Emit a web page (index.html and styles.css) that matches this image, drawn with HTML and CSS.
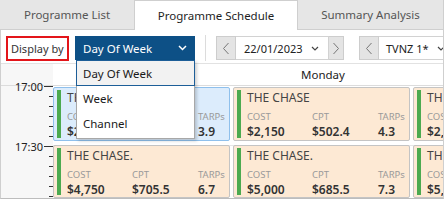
FILE: index.html
```html
<!DOCTYPE html>
<html>
<head>
<meta charset="utf-8">
<link rel="stylesheet" href="styles.css">
</head>
<body>
<div class="app">
  <div class="tabs">
    <div class="tab tab-list">Programme List</div>
    <div class="tab tab-sched active">Programme Schedule</div>
    <div class="tab tab-sum">Summary Analysis</div>
  </div>
  <div class="panel">
    <div class="toolbar">
      <div class="display-label">Display by</div>
      <div class="select-wrap">
        <div class="select">
          <span>Day Of Week</span>
          <svg class="chev" width="9" height="6" viewBox="0 0 9 6"><path d="M1 1 L4.5 4.5 L8 1" fill="none" stroke="#fff" stroke-width="1.5"/></svg>
        </div>
        <ul class="menu">
          <li class="item selected">Day Of Week</li>
          <li class="item">Week</li>
          <li class="item">Channel</li>
        </ul>
      </div>
      <div class="sep"></div>
      <div class="nav nav-date">
        <div class="btn"><svg width="8" height="13" viewBox="0 0 8 13"><path d="M6.5 1 L1.5 6.5 L6.5 12" fill="none" stroke="#777" stroke-width="1"/></svg></div>
        <div class="field date-field">
          <span>22/01/2023</span>
          <svg class="chev-s" width="8" height="5" viewBox="0 0 8 5"><path d="M1 1 L4 4 L7 1" fill="none" stroke="#444" stroke-width="1.2"/></svg>
        </div>
        <div class="btn btn-next"><svg width="8" height="13" viewBox="0 0 8 13"><path d="M1.5 1 L6.5 6.5 L1.5 12" fill="none" stroke="#777" stroke-width="1"/></svg></div>
      </div>
      <div class="nav nav-chan">
        <div class="btn"><svg width="8" height="13" viewBox="0 0 8 13"><path d="M6.5 1 L1.5 6.5 L6.5 12" fill="none" stroke="#777" stroke-width="1"/></svg></div>
        <div class="field chan-field">
          <span>TVNZ 1*</span>
          <svg class="chev-s" width="8" height="5" viewBox="0 0 8 5"><path d="M1 1 L4 4 L7 1" fill="none" stroke="#444" stroke-width="1.2"/></svg>
        </div>
      </div>
    </div>
    <div class="head-row">
      <div class="time-head"></div>
      <div class="day">Sunday</div>
      <div class="day">Monday</div>
      <div class="day">Tuesday</div>
    </div>
    <div class="body">
      <div class="times">
        <div class="slot"><span class="tlabel">17:00</span></div>
        <div class="slot"><span class="tlabel">17:30</span></div>
      </div>
      <div class="cols">
        <div class="col">
          <div class="card sel">
            <div class="bar"></div>
            <div class="content">
              <div class="title">THE CHASE</div>
              <div class="stats">
                <span class="lbl">COST</span><span class="lbl">CPT</span><span class="lbl">TARPs</span>
                <span class="val">$2,300</span><span class="val">$589.7</span><span class="val">3.9</span>
              </div>
            </div>
          </div>
          <div class="card">
            <div class="bar"></div>
            <div class="content">
              <div class="title">THE CHASE.</div>
              <div class="stats">
                <span class="lbl">COST</span><span class="lbl">CPT</span><span class="lbl">TARPs</span>
                <span class="val">$4,750</span><span class="val">$705.5</span><span class="val">6.7</span>
              </div>
            </div>
          </div>
        </div>
        <div class="col">
          <div class="card">
            <div class="bar"></div>
            <div class="content">
              <div class="title">THE CHASE</div>
              <div class="stats">
                <span class="lbl">COST</span><span class="lbl">CPT</span><span class="lbl">TARPs</span>
                <span class="val">$2,150</span><span class="val">$502.4</span><span class="val">4.3</span>
              </div>
            </div>
          </div>
          <div class="card">
            <div class="bar"></div>
            <div class="content">
              <div class="title">THE CHASE.</div>
              <div class="stats">
                <span class="lbl">COST</span><span class="lbl">CPT</span><span class="lbl">TARPs</span>
                <span class="val">$5,000</span><span class="val">$685.5</span><span class="val">7.3</span>
              </div>
            </div>
          </div>
        </div>
        <div class="col">
          <div class="card">
            <div class="bar"></div>
            <div class="content">
              <div class="title">THE CHASE</div>
              <div class="stats">
                <span class="lbl">COST</span><span class="lbl">CPT</span><span class="lbl">TARPs</span>
                <span class="val">$2,150</span><span class="val">$502.4</span><span class="val">4.3</span>
              </div>
            </div>
          </div>
          <div class="card">
            <div class="bar"></div>
            <div class="content">
              <div class="title">THE CHASE.</div>
              <div class="stats">
                <span class="lbl">COST</span><span class="lbl">CPT</span><span class="lbl">TARPs</span>
                <span class="val">$5,000</span><span class="val">$685.5</span><span class="val">7.3</span>
              </div>
            </div>
          </div>
        </div>
      </div>
    </div>
  </div>
</div>
</body>
</html>
```

FILE: styles.css
```css
* { box-sizing: border-box; }
html, body { margin: 0; padding: 0; background: #fff; }
body { font-family: "Noto Sans", "Open Sans", sans-serif; color: #222; }

.app {
  width: 444px;
  height: 199px;
  display: flex;
  flex-direction: column;
  overflow: hidden;
}

/* tabs */
.tabs { display: flex; height: 30px; flex: none; }
.tab {
  flex: none;
  display: flex;
  align-items: center;
  justify-content: center;
  font-size: 11.5px;
  color: #555;
  background: #e6e6e6;
  border-bottom: 1px solid #cfcfcf;
  white-space: nowrap;
}
.tab-list { width: 135px; border-right: 1px solid #cfcfcf; }
.tab-sched { width: 162px; }
.tab-sum { width: 147px; border-left: 1px solid #cfcfcf; border-right: 1px solid #cfcfcf; }
.tab.active {
  background: #fff;
  color: #1e1e1e;
  border-top: 1px solid #cfcfcf;
  border-bottom: none;
}

/* panel */
.panel {
  flex: 1;
  display: flex;
  flex-direction: column;
  border-left: 1px solid #cfcfcf;
  border-right: 1px solid #cfcfcf;
  border-bottom: 1px solid #bdbdbd;
  overflow: hidden;
  min-height: 0;
}

.toolbar {
  flex: none;
  height: 34px;
  display: flex;
  align-items: flex-start;
  padding: 6px 0 0 5px;
  border-bottom: 1px solid #e2e2e2;
  font-size: 11px;
  white-space: nowrap;
}
.toolbar > * { flex: none; }
.display-label {
  width: 63px;
  height: 25px;
  border: 2px solid #e3151a;
  display: flex;
  align-items: center;
  padding-left: 3px;
  color: #333;
}
.select-wrap { position: relative; margin-left: 6px; z-index: 5; }
.select {
  width: 120px;
  height: 24px;
  background: #0d5086;
  color: #fff;
  font-size: 11.5px;
  display: flex;
  align-items: center;
  justify-content: space-between;
  padding: 0 8px 0 8px;
}
.chev { display: block; }

.menu {
  position: absolute;
  left: 1px;
  top: 24px;
  width: 119px;
  margin: 0;
  padding: 0 0 2px 0;
  list-style: none;
  background: #fff;
  border: 1px solid #a8a8a8;
  box-shadow: 2px 2px 3px rgba(0,0,0,0.18);
  font-size: 11.5px;
}
.item {
  height: 25px;
  display: flex;
  align-items: center;
  padding-left: 6px;
  color: #1a1a1a;
  border: 1px solid transparent;
  margin-left: -1px;
  width: 119px;
}
.item.selected {
  height: 26px;
  background: #f2f2f2;
  border-color: #1d5e98;
  margin-top: -1px;
}

.sep {
  width: 1px;
  height: 26px;
  background: #dcdcdc;
  margin: -1px 0 0 10px;
}

.nav { display: flex; height: 24px; margin-left: 10px; }
.nav-chan { margin-left: 15px; }
.btn {
  flex: none;
  width: 20px;
  height: 24px;
  background: #e4e4e4;
  border: 1px solid #cdcdcd;
  display: flex;
  align-items: center;
  justify-content: center;
}
.btn-next { width: 15px; border-left: none; }
.field {
  flex: none;
  height: 24px;
  border: 1px solid #d2d2d2;
  border-left: none;
  display: flex;
  align-items: center;
  color: #222;
}
.date-field { width: 93px; padding-left: 8px; }
.date-field .chev-s { margin-left: 8px; }
.chan-field { width: 80px; padding-left: 7px; border-right: none; }
.chan-field .chev-s { margin-left: 8px; }

/* header row */
.head-row {
  flex: none;
  height: 22px;
  display: flex;
  border-bottom: 1px solid #dcdcdc;
  font-size: 11.5px;
}
.time-head { width: 52px; flex: none; background: #f7f7f7; }
.day {
  flex: none;
  width: 180px;
  display: flex;
  align-items: center;
  justify-content: center;
  color: #222;
}

/* body */
.body { flex: 1; display: flex; min-height: 0; }
.times { width: 52px; flex: none; background: #f7f7f7; }
.slot {
  height: 60px;
  display: flex;
  justify-content: flex-end;
  background:
    linear-gradient(#333, #333) right 0 top 0 / 9px 1px no-repeat,
    repeating-linear-gradient(to bottom, #333 0 1px, transparent 1px 10px) right 0 top 0 / 4px 100% no-repeat;
}
.tlabel {
  font-size: 11px;
  line-height: 16px;
  height: 16px;
  margin-top: -7px;
  margin-right: 10px;
  color: #222;
}

.cols {
  flex: none;
  display: flex;
  gap: 3px;
  padding-top: 1px;
  background: linear-gradient(#e6e6e6, #e6e6e6) left 0 top 59px / 100% 1px no-repeat;
}
.col { flex: none; width: 177px; display: flex; flex-direction: column; gap: 4px; }
.card {
  height: 56px;
  display: flex;
  background: #fde9d4;
  border: 1px solid #c4c4c4;
  border-radius: 2px;
  overflow: hidden;
}
.card.sel { background: #dcecfc; border-color: #8fc0ec; }
.bar { width: 4px; flex: none; background: #4caa50; margin: 2px 0 2px 3px; }
.content { padding: 2px 0 0 6px; flex: 1; min-width: 0; }
.title { font-size: 12px; line-height: 15px; color: #444; white-space: nowrap; }
.stats {
  display: grid;
  grid-template-columns: 65px 66px auto;
  row-gap: 1px;
  margin-top: 6px;
}
.lbl { font-size: 9.5px; line-height: 12px; color: #9a9a9a; }
.val { font-size: 12px; line-height: 15px; font-weight: 600; color: #333; white-space: nowrap; }
```
